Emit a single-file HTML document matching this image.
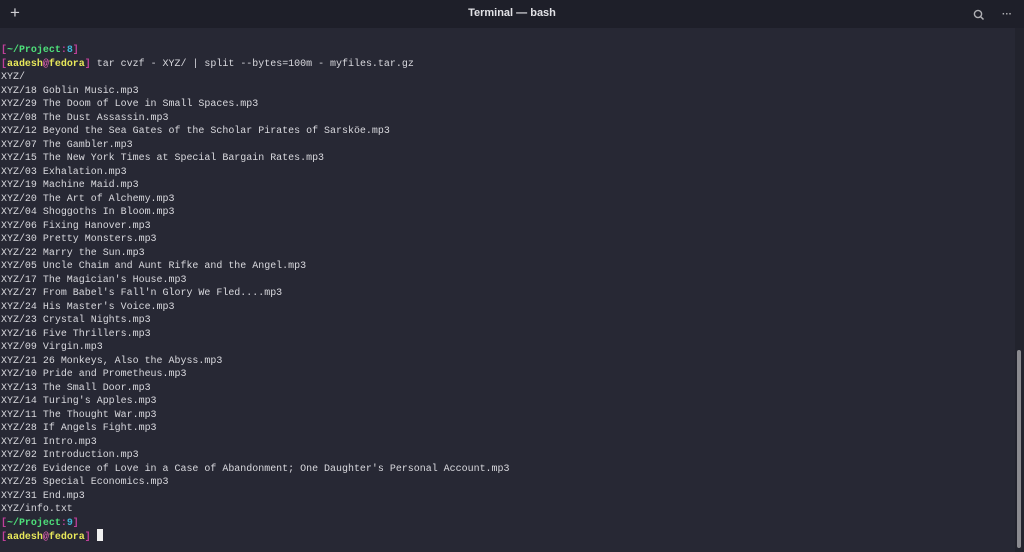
<!DOCTYPE html>
<html><head><meta charset="utf-8"><style>
html,body{margin:0;padding:0;width:1024px;height:552px;overflow:hidden;background:#272834;}
.hdr{position:absolute;left:0;top:0;width:1024px;height:28px;background:#1e1f29;}
.title{position:absolute;left:0;width:1024px;top:7px;text-align:center;font:bold 11px "Liberation Sans",sans-serif;color:#e2e2e6;}
.plus{position:absolute;left:10px;top:3px;color:#d0d0d4;font:17px "Liberation Sans",sans-serif;}
.dots{position:absolute;left:1002px;top:9px;color:#b0b0b4;font:bold 10px "Liberation Sans",sans-serif;}
.track{position:absolute;left:1015px;top:28px;width:9px;height:524px;background:#22232d;}
.thumb{position:absolute;left:1017px;top:350px;width:4px;height:198px;background:#8b8b90;border-radius:2px;}
pre{position:absolute;left:1px;top:43px;margin:0;font:9.98px/13.5px "Liberation Mono",monospace;color:#d9d9de;}
.b{color:#c0409a;font-weight:bold}.g{color:#4ee07a;font-weight:bold}.c{color:#3fb8d8;font-weight:bold}.y{color:#e8e85a;font-weight:bold}.p{color:#e060b0;font-weight:bold}
.cur{display:inline-block;width:6px;height:12px;background:#f0f0f0;vertical-align:-2px;}
</style></head><body>
<div class="hdr">
<div class="plus">+</div>
<div class="title">Terminal — bash</div>
<svg style="position:absolute;left:973px;top:9px" width="12" height="12" viewBox="0 0 12 12"><circle cx="5" cy="5" r="3.6" fill="none" stroke="#b0b0b4" stroke-width="1.4"/><path d="M7.6 7.6 L10.5 10.5" stroke="#b0b0b4" stroke-width="1.5"/></svg>
<div class="dots">···</div>
</div>
<div class="track"></div><div class="thumb"></div>
<pre><span class="b">[</span><span class="g">~/Project</span><span class="b">:</span><span class="c">8</span><span class="b">]</span>
<span class="b">[</span><span class="y">aadesh</span><span class="p">@</span><span class="y">fedora</span><span class="b">]</span> tar cvzf - XYZ/ | split --bytes=100m - myfiles.tar.gz
XYZ/
XYZ/18 Goblin Music.mp3
XYZ/29 The Doom of Love in Small Spaces.mp3
XYZ/08 The Dust Assassin.mp3
XYZ/12 Beyond the Sea Gates of the Scholar Pirates of Sarsköe.mp3
XYZ/07 The Gambler.mp3
XYZ/15 The New York Times at Special Bargain Rates.mp3
XYZ/03 Exhalation.mp3
XYZ/19 Machine Maid.mp3
XYZ/20 The Art of Alchemy.mp3
XYZ/04 Shoggoths In Bloom.mp3
XYZ/06 Fixing Hanover.mp3
XYZ/30 Pretty Monsters.mp3
XYZ/22 Marry the Sun.mp3
XYZ/05 Uncle Chaim and Aunt Rifke and the Angel.mp3
XYZ/17 The Magician's House.mp3
XYZ/27 From Babel's Fall'n Glory We Fled....mp3
XYZ/24 His Master's Voice.mp3
XYZ/23 Crystal Nights.mp3
XYZ/16 Five Thrillers.mp3
XYZ/09 Virgin.mp3
XYZ/21 26 Monkeys, Also the Abyss.mp3
XYZ/10 Pride and Prometheus.mp3
XYZ/13 The Small Door.mp3
XYZ/14 Turing's Apples.mp3
XYZ/11 The Thought War.mp3
XYZ/28 If Angels Fight.mp3
XYZ/01 Intro.mp3
XYZ/02 Introduction.mp3
XYZ/26 Evidence of Love in a Case of Abandonment; One Daughter's Personal Account.mp3
XYZ/25 Special Economics.mp3
XYZ/31 End.mp3
XYZ/info.txt
<span class="b">[</span><span class="g">~/Project</span><span class="b">:</span><span class="c">9</span><span class="b">]</span>
<span class="b">[</span><span class="y">aadesh</span><span class="p">@</span><span class="y">fedora</span><span class="b">]</span> <span class="cur"></span></pre>
</body></html>
